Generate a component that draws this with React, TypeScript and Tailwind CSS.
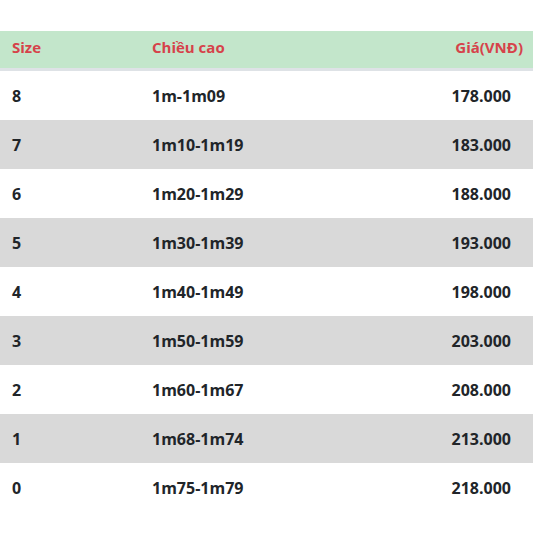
import React from "react";

const rows = [
  ["8", "1m-1m09", "178.000"],
  ["7", "1m10-1m19", "183.000"],
  ["6", "1m20-1m29", "188.000"],
  ["5", "1m30-1m39", "193.000"],
  ["4", "1m40-1m49", "198.000"],
  ["3", "1m50-1m59", "203.000"],
  ["2", "1m60-1m67", "208.000"],
  ["1", "1m68-1m74", "213.000"],
  ["0", "1m75-1m79", "218.000"],
];

export default function App() {
  return (
    <div className="w-[533px] h-[533px] bg-white pt-[31px] font-['Open_Sans',sans-serif] font-bold">
      <div className="flex h-[40px] items-center pb-[5px] bg-[#c3e6cb] text-[#d6424a] text-[15px] border-b-[3px] border-[#dee2e6]">
        <div className="w-[152px] pl-[12px]">Size</div>
        <div className="flex-1">Chiều cao</div>
        <div className="pr-[10px]">Giá(VNĐ)</div>
      </div>
      {rows.map((r, i) => (
        <div
          key={r[0]}
          className={`flex h-[49px] items-center text-[16px] text-[#212529] ${i % 2 === 1 ? "bg-[#d9d9d9]" : "bg-white"}`}
        >
          <div className="w-[152px] pl-[12px]">{r[0]}</div>
          <div className="flex-1">{r[1]}</div>
          <div className="pr-[22px]">{r[2]}</div>
        </div>
      ))}
    </div>
  );
}
